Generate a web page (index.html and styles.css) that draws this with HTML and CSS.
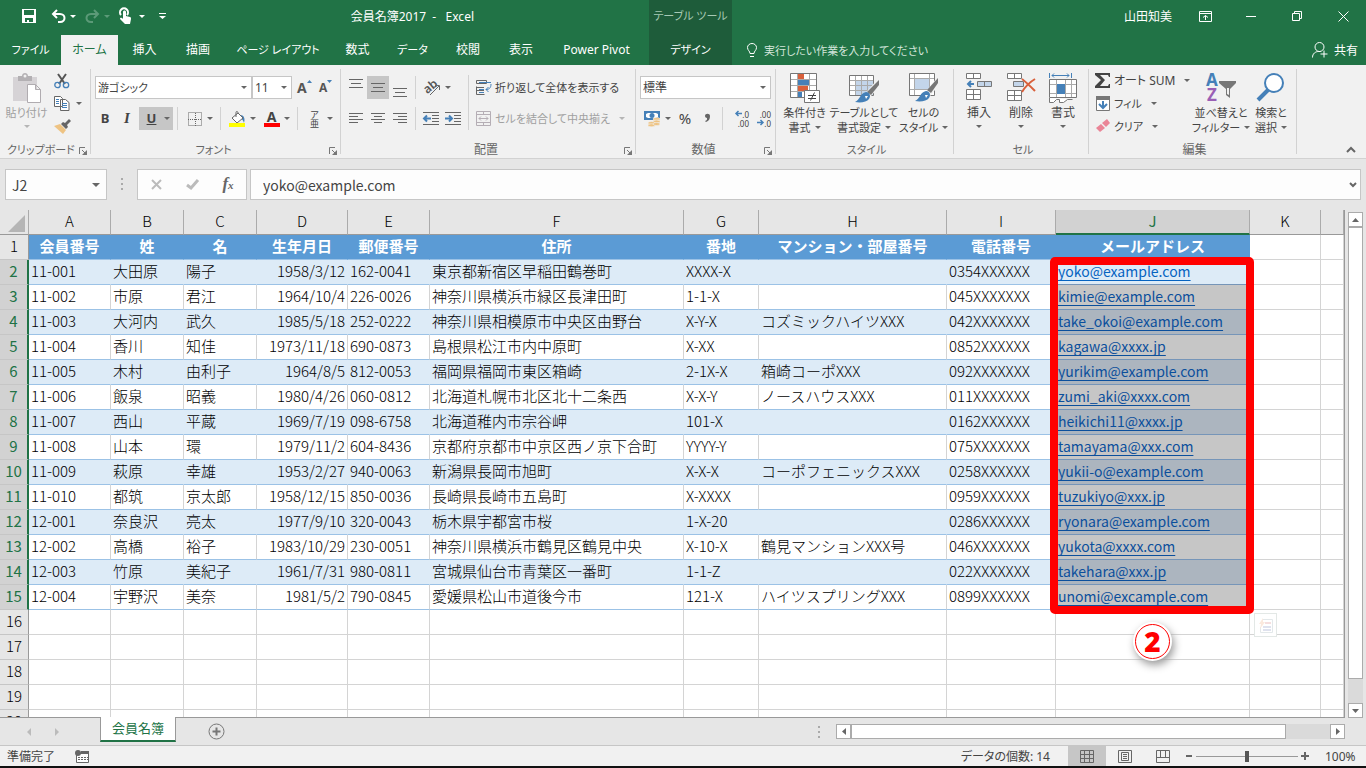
FILE: index.html
```html
<!DOCTYPE html>
<html lang="ja">
<head>
    <meta charset="UTF-8">
    <title>会員名簿2017 - Excel</title>
    <meta name="viewport" content="width=device-width, initial-scale=1">
    <link rel="stylesheet" href="styles.css">
</head>
<body>
<header class="titlebar">
    <div class="title-left">
        <div class="title-row">
            <div class="quick-access">
                <button class="qat save" aria-label="上書き保存"><svg width="14" height="14"><path fill="#fff" fill-rule="evenodd" d="M0 0h14v14H0zM2 1v5h10V1zM3 9v4h2v-2h2v2h4V9z"/></svg></button>
                <button class="qat" aria-label="元に戻す"><svg width="15" height="13" fill="none" stroke="#fff" stroke-width="2"><path d="M6 0L2 4l4 4M2 4h7c6 0 6 8 0 8H7"/></svg><i class="caret"></i></button>
                <button class="qat dim" aria-label="やり直し"><svg width="15" height="13" fill="none" stroke="#5c9a78" stroke-width="2"><path d="M9 0l4 4-4 4M13 4H6c-6 0-6 8 0 8h2"/></svg><i class="caret"></i></button>
                <button class="qat touch" aria-label="タッチ/マウス モードの切り替え"><svg width="13" height="16"><path fill="none" stroke="#fff" stroke-width="2" d="M2 7a4 4 0 1 1 6 0"/><path fill="#fff" d="M4 4c0-2 3-2 3 0v4l4 1c1 0 1 1 1 2l-1 5H6L1 11c0-1 1-2 3 0z"/></svg><i class="caret"></i></button>
                <button class="qat more" aria-label="クイック アクセス ツール バーのユーザー設定"><svg width="7" height="6"><path fill="#fff" d="M0 0h7v1H0zM0 3h7L3.500 6z"/></svg></button>
            </div>
            <h1 class="doc-title">会員名簿2017&nbsp; -&nbsp;&nbsp; Excel</h1>
        </div>
        <nav class="tabs">
            <a href="#" class="kana">ファイル</a>
            <a href="#" class="active">ホーム</a>
            <a href="#">挿入</a>
            <a href="#">描画</a>
            <a href="#" class="kana">ページ レイアウト</a>
            <a href="#">数式</a>
            <a href="#" class="kana">データ</a>
            <a href="#">校閲</a>
            <a href="#">表示</a>
            <a href="#">Power Pivot</a>
        </nav>
    </div>
    <div class="title-context">
        <span class="context-name kana">テーブル ツール</span>
        <a href="#" class="kana">デザイン</a>
    </div>
    <div class="title-right">
        <div class="window-row">
            <span class="user">山田知美</span>
            <button aria-label="リボンの表示オプション"><svg width="13" height="11" fill="none" stroke="#fff"><path d="M.5.5h12v10H.5zM0 2.500h13M6.500 9V4.500M4 6.500l2.500-2 2.500 2"/></svg></button>
            <button aria-label="最小化"><svg width="10" height="10"><path stroke="#fff" d="M0 5.500h10"/></svg></button>
            <button aria-label="元に戻す (縮小)"><svg width="10" height="10" fill="none" stroke="#fff"><path d="M.5 2.500h7v7h-7zM2.500 2V.5h7v7H8"/></svg></button>
            <button aria-label="閉じる"><svg width="11" height="11"><path stroke="#fff" d="M.5.5l10 10M10.500.5l-10 10"/></svg></button>
        </div>
        <div class="tell-row">
            <button class="tell kana"><svg width="10" height="14" fill="none" stroke="#fff"><path d="M3 10.500C3 8 .5 7.500.5 4.500a4.500 4 0 0 1 9 0C9.500 7.500 7 8 7 10.500zM3 13.500h4"/></svg>実行したい作業を入力してください</button>
            <button class="share"><svg width="16" height="16" fill="none" stroke="#fff"><circle cx="7.500" cy="5" r="4.500"/><path d="M.5 15.500c0-4 3-6 6-6h2M12 8.500v7M8.500 12h7"/></svg>共有</button>
        </div>
    </div>
</header>

<section class="ribbon" aria-label="リボン">
    <div class="group clipboard">
        <div class="group-body">
            <button class="big kana disabled"><svg width="30" height="30"><path fill="#d6d3d6" d="M1 4h24v24H1z"/><path fill="#b3b0b3" d="M6 3h4c0-4 6-4 6 0h4v5H6z"/><circle cx="13" cy="3" r="1.500" fill="#f1f1f1"/><path fill="#fff" stroke="#b0acb0" d="M15.500 11.500h8l5 5v13h-13zM23.500 11.500v5h5"/></svg><span>貼り付け</span><i class="caret"></i></button>
            <div class="stack">
                <button aria-label="切り取り"><svg width="16" height="16" fill="none" stroke-width="2"><path stroke="#555" d="M4 1l7 10M12 1L5 11"/><circle stroke="#4580b8" stroke-width="1.300" cx="3.500" cy="12" r="2.700"/><circle stroke="#4580b8" stroke-width="1.300" cx="12" cy="12" r="2.700"/></svg></button>
                <button aria-label="コピー"><svg width="16" height="15" fill="#fff" stroke="#666"><path d="M.5.500h6l2 2v8h-8zM6.500 3.500h5l3.500 3v8H6.500z"/><path stroke="#4580b8" d="M2 3.500h3M2 5.500h3M2 7.500h3M8 7.500h5M8 9.500h5M8 11.500h5"/></svg><i class="caret"></i></button>
                <button aria-label="書式のコピー/貼り付け"><svg width="17" height="15"><path fill="#666" d="M7 5l2-2 2 1 4-4 2 2-4 4 1 2-2 2z"/><path fill="#eec383" d="M6 5l6 6-3 4L0 7z"/></svg></button>
            </div>
        </div>
        <div class="group-label kana"><span>クリップボード</span><button class="launcher" aria-label="クリップボード"><svg width="8" height="8"><path fill="none" stroke="#777" d="M.5 7V.5H6M3 3l3 3"/><path fill="#777" d="M8 3v5H3z"/></svg></button></div>
    </div>

    <div class="group font">
        <div class="group-body rows">
            <div class="row">
                <span class="select font-name kana"><select aria-label="フォント"><option>游ゴシック</option></select></span>
                <span class="select font-size"><select aria-label="フォント サイズ"><option>11</option></select></span>
                <button class="tool grow" aria-label="フォント サイズの拡大"><b>A</b><svg width="5" height="3"><path fill="#4580b8" d="M0 3h5L2.500 0z"/></svg></button>
                <button class="tool grow small" aria-label="フォント サイズの縮小"><b>A</b><svg width="5" height="3"><path fill="#4580b8" d="M0 0h5L2.500 3z"/></svg></button>
            </div>
            <div class="row">
                <button class="tool"><b>B</b></button>
                <button class="tool"><em>I</em></button>
                <button class="tool drop pressed"><u>U</u><i class="caret"></i></button>
                <i class="sep"></i>
                <button class="tool drop" aria-label="罫線"><svg width="14" height="14" fill="none" stroke="#666" stroke-dasharray="1 1"><path d="M.5.5h13v13H.5zM7.500 1v13M0 7.500h14"/></svg><i class="caret"></i></button>
                <i class="sep"></i>
                <button class="tool drop" aria-label="塗りつぶしの色"><svg width="17" height="16"><path fill="#4580b8" d="M11 4c5 0 5 5 4 8-1-3-2-4-4-5z"/><path fill="#fff" stroke="#666" d="M3 7l6-5 5 5-6 5z"/><path fill="none" stroke="#666" d="M7 6V1.500C7 0 9 0 9 2"/><path fill="#ff0" d="M0 12h16v4H0z"/></svg><i class="caret"></i></button>
                <button class="tool drop fontcolor" aria-label="フォントの色"><b>A</b><i class="caret"></i></button>
                <i class="sep"></i>
                <button class="tool drop ruby"><span>ア<br>亜</span><i class="caret"></i></button>
            </div>
        </div>
        <div class="group-label kana"><span>フォント</span><button class="launcher" aria-label="フォントの設定"><svg width="8" height="8"><path fill="none" stroke="#777" d="M.5 7V.5H6M3 3l3 3"/><path fill="#777" d="M8 3v5H3z"/></svg></button></div>
    </div>

    <div class="group align">
        <div class="group-body">
            <div class="rows">
                <div class="row">
                    <button class="tool top" aria-label="上揃え"><svg width="14" height="9" stroke="#666"><path d="M0 .5h14M2 4.500h10M0 8.500h14"/></svg></button>
                    <button class="tool pressed" aria-label="上下中央揃え"><svg width="14" height="9" stroke="#666"><path d="M0 .5h14M2 4.500h10M0 8.500h14"/></svg></button>
                    <button class="tool bottom" aria-label="下揃え"><svg width="14" height="9" stroke="#666"><path d="M0 .5h14M2 4.500h10M0 8.500h14"/></svg></button>
                    <i class="sep"></i>
                    <button class="tool drop" aria-label="方向"><svg width="17" height="16"><text x="0" y="11" class="glyph" transform="rotate(-40 6 8)">ab</text><path fill="none" stroke="#666" d="M6 15l9-9M11 5.500h4.500V10"/></svg><i class="caret"></i></button>
                </div>
                <div class="row">
                    <button class="tool" aria-label="左揃え"><svg width="14" height="11" stroke="#666"><path d="M0 .5h14M0 3.500h9M0 6.500h14M0 9.500h9"/></svg></button>
                    <button class="tool" aria-label="中央揃え"><svg width="14" height="11" stroke="#666"><path d="M0 .5h14M3 3.500h8M0 6.500h14M3 9.500h8"/></svg></button>
                    <button class="tool" aria-label="右揃え"><svg width="14" height="11" stroke="#666"><path d="M0 .5h14M5 3.500h9M0 6.500h14M5 9.500h9"/></svg></button>
                    <i class="sep"></i>
                    <button class="tool" aria-label="インデントを減らす"><svg width="16" height="13" fill="none" stroke="#666"><path d="M0 .5h16M9 3.500h7M9 6.500h7M9 9.500h7M0 12.500h16"/><path stroke="#4580b8" stroke-width="2" d="M8 6.500H1M4 3.500l-3 3 3 3"/></svg></button>
                    <button class="tool" aria-label="インデントを増やす"><svg width="16" height="13" fill="none" stroke="#666"><path d="M0 .5h16M9 3.500h7M9 6.500h7M9 9.500h7M0 12.500h16"/><path stroke="#4580b8" stroke-width="2" d="M0 6.500h7M4 3.500l3 3-3 3"/></svg></button>
                </div>
            </div>
            <i class="sep long"></i>
            <div class="rows">
                <button class="labelled kana"><svg width="16" height="15" fill="none" stroke="#666"><path d="M.5.5h10v3H.5zM0 7.500h8M0 10.500h8M.5 6.500v8h8"/><path stroke="#4580b8" d="M3 2.500h12M3 9.500h5M3 12.500h5M15 4c0 4-2 5.500-5 5.500M12.500 7l-2.500 2.500 2.500 2.500"/></svg>折り返して全体を表示する</button>
                <button class="labelled kana disabled"><svg width="16" height="15" fill="none" stroke="#b5aeb5"><path d="M.5.5h14v14H.5zM0 3.500h15M0 11.500h15M7.500 0v4M7.500 11v4M3 7.500h9M5 5.500l-2 2 2 2M10 5.500l2 2-2 2"/></svg>セルを結合して中央揃え<i class="caret"></i></button>
            </div>
        </div>
        <div class="group-label"><span>配置</span><button class="launcher" aria-label="配置の設定"><svg width="8" height="8"><path fill="none" stroke="#777" d="M.5 7V.5H6M3 3l3 3"/><path fill="#777" d="M8 3v5H3z"/></svg></button></div>
    </div>

    <div class="group number">
        <div class="group-body rows">
            <div class="row">
                <span class="select format"><select aria-label="表示形式"><option>標準</option></select></span>
            </div>
            <div class="row">
                <button class="tool drop" aria-label="通貨表示形式"><svg width="17" height="16"><path fill="#4580b8" d="M0 0h16v9H0z"/><path fill="#fff" d="M2 3l2-1h8l2 1v3l-2 1H4L2 6z"/><circle cx="8" cy="4.500" r="2.500" fill="#4580b8"/><g fill="#eec383" stroke="#f1f1f1" stroke-width=".6"><ellipse cx="12.500" cy="8" rx="3.500" ry="1.500"/><ellipse cx="12.500" cy="10.500" rx="3.500" ry="1.500"/><ellipse cx="7.500" cy="12" rx="3.500" ry="1.500"/><ellipse cx="7.500" cy="14.300" rx="3.500" ry="1.500"/><ellipse cx="12.500" cy="13" rx="3.500" ry="1.500"/></g></svg><i class="caret"></i></button>
                <button class="tool percent">%</button>
                <button class="tool" aria-label="桁区切りスタイル"><svg width="6" height="9"><path fill="#666" d="M1 2c0-3 5-3 5 0 0 3-1 5-4 6l-1-1c2-1 2-1 2-3-1 0-2-1-2-2z"/></svg></button>
                <i class="sep"></i>
                <button class="tool decimals"><span><svg width="7" height="7" fill="none" stroke="#4580b8" stroke-width="1.500"><path d="M7 3.500H1M3.500 1L1 3.500 3.500 6"/></svg>.0</span><span>.00</span></button>
                <button class="tool decimals"><span>.00</span><span><svg width="7" height="7" fill="none" stroke="#4580b8" stroke-width="1.500"><path d="M0 3.500h6M3.500 1L6 3.500 3.500 6"/></svg>.0</span></button>
            </div>
        </div>
        <div class="group-label"><span>数値</span><button class="launcher" aria-label="表示形式の設定"><svg width="8" height="8"><path fill="none" stroke="#777" d="M.5 7V.5H6M3 3l3 3"/><path fill="#777" d="M8 3v5H3z"/></svg></button></div>
    </div>

    <div class="group styles">
        <div class="group-body">
            <button class="big kana"><svg width="30" height="30"><path fill="#fff" stroke="#777" d="M.5.5h26v24H.5z"/><path stroke="#aaa" d="M7.500 1v23M19.500 1v23M1 6.500h25M1 12.500h25M1 18.500h25"/><path fill="#d9603b" d="M8 1h6v5H8zM8 13h10v5H8z"/><path fill="#4580b8" d="M8 7h11v5H8zM8 19h4v5H8z"/><path fill="#fff" stroke="#777" d="M14.500 17.500h15v12h-15z"/><path stroke="#444" d="M18 22.500h8M18 25.500h8M24.500 19.500l-4 8"/></svg><span>条件付き<br>書式<i class="caret"></i></span></button>
            <button class="big kana"><svg width="30" height="30"><path fill="#fff" stroke="#777" d="M.5 2.500h24v20H.5z"/><path fill="#c3d5ea" d="M7 8h17v14H7z"/><path stroke="#aaa" d="M6.500 3v19M12.500 3v19M18.500 3v19M1 7.500h23M1 12.500h23M1 17.500h23"/><path stroke="#f1f1f1" stroke-width="6" d="M31 8L18 23"/><path fill="#777" d="M30 7v5l-8 10-4-3z"/><path fill="#4580b8" d="M17 19c4 0 5 4 3 7s-8 4-14 3c5-2 5-9 11-10z"/><path fill="#fff" d="M16 23l3 0-2 3z"/></svg><span>テーブルとして<br>書式設定<i class="caret"></i></span></button>
            <button class="big kana"><svg width="30" height="30"><path fill="#fff" stroke="#777" d="M.5.5h25v22H.5z"/><path stroke="#aaa" d="M5.500 1v21M20.500 1v21M1 5.500h24M1 16.500h24"/><path fill="#c3d5ea" d="M6 6h14v10H6z"/><path stroke="#f1f1f1" stroke-width="6" d="M31 6L18 22"/><path fill="#777" d="M29 5v5l-7 10-4-3z"/><path fill="#4580b8" d="M17 18c4 0 5 4 3 7s-8 4-14 3c5-2 5-9 11-10z"/><path fill="#fff" d="M16 22l3 0-2 3z"/></svg><span>セルの<br>スタイル<i class="caret"></i></span></button>
        </div>
        <div class="group-label kana"><span>スタイル</span></div>
    </div>

    <div class="group cells">
        <div class="group-body">
            <button class="big"><svg width="28" height="30"><path fill="#fff" stroke="#777" d="M1.500.5h14v5h-14zM8.500.5v5M1.500 16.500h14v10h-14zM8.500 16.500v10M1.500 21.500h14"/><path fill="#c3d5ea" stroke="#777" d="M12.500 8.500h14v5h-14zM19.500 8.500v5"/><path fill="none" stroke="#4580b8" stroke-width="2" d="M9 11H3M6 8l-3 3 3 3"/></svg><span>挿入</span><i class="caret"></i></button>
            <button class="big"><svg width="30" height="30"><path fill="#fff" stroke="#777" d="M1.500.5h14v5h-14zM8.500.5v5M1.500 17.500h14v10h-14zM8.500 17.500v10M1.500 22.500h14"/><path fill="#c3d5ea" stroke="#777" d="M7.500 8.500h10v5h-10z"/><path fill="none" stroke="#d9603b" stroke-width="2" d="M16 6c4 3 9 8 13 12M29 6c-5 3-10 8-13 13"/></svg><span>削除</span><i class="caret"></i></button>
            <button class="big"><svg width="28" height="30"><path fill="#fff" stroke="#777" d="M.5 6.500h27v18H.5z"/><path stroke="#aaa" d="M7.500 7v17M16.500 7v17M22.500 7v17M1 11.500h26M1 20.500h26"/><path fill="#4580b8" d="M8 11h8v10H8z"/><path fill="#fff" stroke="#777" d="M.5 25v4.500h4l3-3h3v3h4l4-3h5"/><path fill="none" stroke="#4580b8" d="M.5 0v5M22.500 0v5M3 2.500h17M5 .5l-2 2 2 2M18 .5l2 2-2 2"/></svg><span>書式</span><i class="caret"></i></button>
        </div>
        <div class="group-label kana"><span>セル</span></div>
    </div>

    <div class="group editing">
        <div class="group-body">
            <div class="stack">
                <button class="labelled"><svg width="16" height="15"><path fill="#444" d="M0 0h15v4h-1l-1-2H5l5 5-5 6h8l1-2h1v4H0v-2l6-6-6-5z"/></svg>オート SUM<i class="caret"></i></button>
                <button class="labelled kana"><svg width="16" height="15"><path fill="#fff" stroke="#777" d="M1.500.5h13v14h-13z"/><path fill="#777" d="M1 0h14v4H1z"/><path fill="none" stroke="#4580b8" stroke-width="2" d="M8 5v7M4 8l4 4 4-4"/></svg>フィル<i class="caret"></i></button>
                <button class="labelled kana"><svg width="16" height="15"><path fill="#ea8597" d="M7 4l5-4 3 4-4 4z"/><path fill="#ea8597" d="M6 5l4 4-5 4-4-4z"/></svg>クリア<i class="caret"></i></button>
            </div>
            <button class="big kana sort"><svg width="30" height="30"><text x="0" y="13" class="letter blue">A</text><text x="1" y="28" class="letter purple">Z</text><path fill="#777" d="M13 8h17v2l-6 6v9l-4-3v-6l-7-6z"/><path fill="#f1f1f1" d="M21 15h2v7l-2-1z"/></svg><span>並べ替えと<br>フィルター<i class="caret"></i></span></button>
            <button class="big kana find"><svg width="30" height="30" fill="none" stroke="#4580b8"><path stroke-width="4" d="M12 17L2 27"/><circle cx="18" cy="10" r="9" fill="#fff" stroke-width="2"/></svg><span>検索と<br>選択<i class="caret"></i></span></button>
        </div>
        <div class="group-label"><span>編集</span></div>
    </div>
    <button class="collapse" aria-label="リボンを折りたたむ"><svg width="10" height="6" fill="none" stroke="#666" stroke-width="2"><path d="M1 5l4-4 4 4"/></svg></button>
</section>

<section class="formula-bar">
    <div class="name-box"><input type="text" value="J2" aria-label="名前ボックス"><i class="caret"></i></div>
    <i class="grip"></i>
    <div class="formula-tools">
        <button aria-label="キャンセル"><svg width="11" height="11"><path stroke="#bbb" stroke-width="2" d="M1 1l9 9M10 1l-9 9"/></svg></button>
        <button aria-label="入力"><svg width="13" height="11" fill="none"><path stroke="#bbb" stroke-width="3" d="M1 6l4 3 7-8"/></svg></button>
        <button class="fx" aria-label="関数の挿入"><em>f<small>x</small></em></button>
    </div>
    <div class="formula"><input type="text" value="yoko@example.com" aria-label="数式バー"><svg width="8" height="6" fill="none" stroke="#666" stroke-width="2"><path d="M1 1l3 3 3-3"/></svg></div>
</section>

<main class="sheet">
    <div class="grid-area">
        <table class="grid">
            <colgroup><col class="c-head"><col class="c-a"><col class="c-b"><col class="c-c"><col class="c-d"><col class="c-e"><col class="c-f"><col class="c-g"><col class="c-h"><col class="c-i"><col class="c-j"><col class="c-k"><col></colgroup>
            <thead>
            <tr><th class="corner"><svg width="17" height="17"><path fill="#b5b5b5" d="M17 0v17H0z"/></svg></th><th>A</th><th>B</th><th>C</th><th>D</th><th>E</th><th>F</th><th>G</th><th>H</th><th>I</th><th class="selected">J</th><th>K</th><th></th></tr>
            </thead>
            <tbody class="members">
            <tr class="titles"><th>1</th><td>会員番号</td><td>姓</td><td>名</td><td>生年月日</td><td>郵便番号</td><td>住所</td><td>番地</td><td>マンション・部屋番号</td><td>電話番号</td><td>メールアドレス</td><td></td><td></td></tr>
            <tr><th>2</th><td>11-001</td><td>大田原</td><td>陽子</td><td>1958/3/12</td><td>162-0041</td><td>東京都新宿区早稲田鶴巻町</td><td>XXXX-X</td><td></td><td>0354XXXXXX</td><td class="current"><a href="#">yoko@example.com</a></td><td></td><td></td></tr>
            <tr><th>3</th><td>11-002</td><td>市原</td><td>君江</td><td>1964/10/4</td><td>226-0026</td><td>神奈川県横浜市緑区長津田町</td><td>1-1-X</td><td></td><td>045XXXXXXX</td><td><a href="#">kimie@example.com</a></td><td></td><td></td></tr>
            <tr><th>4</th><td>11-003</td><td>大河内</td><td>武久</td><td>1985/5/18</td><td>252-0222</td><td>神奈川県相模原市中央区由野台</td><td>X-Y-X</td><td>コズミックハイツXXX</td><td>042XXXXXXX</td><td><a href="#">take_okoi@example.com</a></td><td></td><td></td></tr>
            <tr><th>5</th><td>11-004</td><td>香川</td><td>知佳</td><td>1973/11/18</td><td>690-0873</td><td>島根県松江市内中原町</td><td>X-XX</td><td></td><td>0852XXXXXX</td><td><a href="#">kagawa@xxxx.jp</a></td><td></td><td></td></tr>
            <tr><th>6</th><td>11-005</td><td>木村</td><td>由利子</td><td>1964/8/5</td><td>812-0053</td><td>福岡県福岡市東区箱崎</td><td>2-1X-X</td><td>箱崎コーポXXX</td><td>092XXXXXXX</td><td><a href="#">yurikim@example.com</a></td><td></td><td></td></tr>
            <tr><th>7</th><td>11-006</td><td>飯泉</td><td>昭義</td><td>1980/4/26</td><td>060-0812</td><td>北海道札幌市北区北十二条西</td><td>X-X-Y</td><td>ノースハウスXXX</td><td>011XXXXXXX</td><td><a href="#">zumi_aki@xxxx.com</a></td><td></td><td></td></tr>
            <tr><th>8</th><td>11-007</td><td>西山</td><td>平蔵</td><td>1969/7/19</td><td>098-6758</td><td>北海道稚内市宗谷岬</td><td>101-X</td><td></td><td>0162XXXXXX</td><td><a href="#">heikichi11@xxxx.jp</a></td><td></td><td></td></tr>
            <tr><th>9</th><td>11-008</td><td>山本</td><td>環</td><td>1979/11/2</td><td>604-8436</td><td>京都府京都市中京区西ノ京下合町</td><td>YYYY-Y</td><td></td><td>075XXXXXXX</td><td><a href="#">tamayama@xxx.com</a></td><td></td><td></td></tr>
            <tr><th>10</th><td>11-009</td><td>萩原</td><td>幸雄</td><td>1953/2/27</td><td>940-0063</td><td>新潟県長岡市旭町</td><td>X-X-X</td><td>コーポフェニックスXXX</td><td>0258XXXXXX</td><td><a href="#">yukii-o@example.com</a></td><td></td><td></td></tr>
            <tr><th>11</th><td>11-010</td><td>都筑</td><td>京太郎</td><td>1958/12/15</td><td>850-0036</td><td>長崎県長崎市五島町</td><td>X-XXXX</td><td></td><td>0959XXXXXX</td><td><a href="#">tuzukiyo@xxx.jp</a></td><td></td><td></td></tr>
            <tr><th>12</th><td>12-001</td><td>奈良沢</td><td>亮太</td><td>1977/9/10</td><td>320-0043</td><td>栃木県宇都宮市桜</td><td>1-X-20</td><td></td><td>0286XXXXXX</td><td><a href="#">ryonara@example.com</a></td><td></td><td></td></tr>
            <tr><th>13</th><td>12-002</td><td>高橋</td><td>裕子</td><td>1983/10/29</td><td>230-0051</td><td>神奈川県横浜市鶴見区鶴見中央</td><td>X-10-X</td><td>鶴見マンションXXX号</td><td>046XXXXXXX</td><td><a href="#">yukota@xxxx.com</a></td><td></td><td></td></tr>
            <tr><th>14</th><td>12-003</td><td>竹原</td><td>美紀子</td><td>1961/7/31</td><td>980-0811</td><td>宮城県仙台市青葉区一番町</td><td>1-1-Z</td><td></td><td>022XXXXXXX</td><td><a href="#">takehara@xxx.jp</a></td><td></td><td></td></tr>
            <tr><th>15</th><td>12-004</td><td>宇野沢</td><td>美奈</td><td>1981/5/2</td><td>790-0845</td><td>愛媛県松山市道後今市</td><td>121-X</td><td>ハイツスプリングXXX</td><td>0899XXXXXX</td><td><a href="#">unomi@excample.com</a></td><td></td><td></td></tr>
            </tbody>
            <tbody>
            <tr><th>16</th><td></td><td></td><td></td><td></td><td></td><td></td><td></td><td></td><td></td><td></td><td></td><td></td></tr>
            <tr><th>17</th><td></td><td></td><td></td><td></td><td></td><td></td><td></td><td></td><td></td><td></td><td></td><td></td></tr>
            <tr><th>18</th><td></td><td></td><td></td><td></td><td></td><td></td><td></td><td></td><td></td><td></td><td></td><td></td></tr>
            <tr><th>19</th><td></td><td></td><td></td><td></td><td></td><td></td><td></td><td></td><td></td><td></td><td></td><td></td></tr>
            <tr><th>20</th><td></td><td></td><td></td><td></td><td></td><td></td><td></td><td></td><td></td><td></td><td></td><td></td></tr>
            </tbody>
        </table>
        <div class="highlight"></div>
        <div class="step">2</div>
        <button class="quick-analysis" aria-label="クイック分析"><svg width="14" height="15"><path fill="none" stroke="#e3e8ea" d="M4 1.500h9.500v13H1.500V9"/><path fill="#fbe9dd" d="M4 0L0 6h2l-1 5 5-7H4z"/><path stroke="#f5dede" stroke-width="2" d="M6 5h6"/><path stroke="#dfe2ee" stroke-width="2" d="M4 9h8M4 12h8"/></svg></button>
    </div>
    <div class="vscroll">
        <button aria-label="上へスクロール"><svg width="7" height="4"><path fill="#666" d="M0 4h7L3.500 0z"/></svg></button>
        <i class="thumb"></i>
        <i class="track"></i>
        <button aria-label="下へスクロール"><svg width="7" height="4"><path fill="#666" d="M0 0h7L3.500 4z"/></svg></button>
    </div>
</main>

<section class="sheet-tabs">
    <button class="nav" aria-label="前のシート"><svg width="4" height="8"><path fill="#bbb" d="M4 0v8L0 4z"/></svg></button>
    <button class="nav" aria-label="次のシート"><svg width="4" height="8"><path fill="#bbb" d="M0 0v8l4-4z"/></svg></button>
    <button class="tab">会員名簿</button>
    <button class="add" aria-label="新しいシート"><svg width="17" height="17" fill="none" stroke="#777"><circle cx="8.500" cy="8.500" r="7.500"/><path stroke-width="2" d="M4.500 8.500h8M8.500 4.500v8"/></svg></button>
    <i class="grip"></i>
    <div class="hscroll">
        <button aria-label="左へスクロール"><svg width="4" height="7"><path fill="#666" d="M4 0v7L0 3.500z"/></svg></button>
        <i class="thumb"></i>
        <i class="track"></i>
        <button aria-label="右へスクロール"><svg width="4" height="7"><path fill="#666" d="M0 0v7l4-3.500z"/></svg></button>
    </div>
</section>

<footer class="status">
    <span class="ready">準備完了</span>
    <button class="macro" aria-label="マクロの記録"><svg width="14" height="13"><path fill="#fff" stroke="#666" d="M1.500 3.500h12v9h-12z"/><path fill="#666" d="M6 1h8v3H6z"/><circle cx="3" cy="3" r="3" fill="#666"/><path stroke="#666" stroke-dasharray="2 1" d="M3 7.500h10M3 9.500h10"/></svg></button>
    <span class="count">データの個数: 14</span>
    <button class="view active" aria-label="標準"><svg width="14" height="13" fill="none" stroke="#666"><path d="M.5.5h13v12H.5zM4.500 0v13M9.500 0v13M0 4.500h14M0 8.500h14"/></svg></button>
    <button class="view" aria-label="ページ レイアウト"><svg width="14" height="13" fill="none" stroke="#666"><path d="M.5.5h13v12H.5zM3.500 2.500h7v8h-7zM5 4.500h4M5 6.500h4M5 8.500h4"/></svg></button>
    <button class="view" aria-label="改ページ プレビュー"><svg width="14" height="13" fill="none" stroke="#666"><path d="M.5.5h13v12H.5zM4.500 0v7.500h5V0M0 7.500h14M9.500 0v7"/></svg></button>
    <button class="zoom-step" aria-label="縮小"><svg width="6" height="2"><path fill="#666" d="M0 0h6v2H0z"/></svg></button>
    <input class="zoom" type="range" min="0" max="100" value="50" aria-label="ズーム">
    <button class="zoom-step" aria-label="拡大"><svg width="8" height="8"><path fill="#666" d="M3 0h2v3h3v2H5v3H3V5H0V3h3z"/></svg></button>
    <span class="zoom-value">100%</span>
</footer>
</body>
</html>
```
FILE: styles.css
```css
* {
    box-sizing: border-box;
}
html, body {
    height: 100%;
}
body {
    margin: 0;
    display: flex;
    flex-direction: column;
    overflow: hidden;
    background-color: #e6e6e6;
    color: #444;
    font-family: "Noto Sans", "Noto Sans CJK JP", sans-serif;
    font-size: 12px;
    line-height: 15px;
    font-feature-settings: "palt";
}
button, input, select {
    font: inherit;
    font-feature-settings: inherit;
    color: inherit;
    background: none;
    border: 0;
    padding: 0;
    margin: 0;
}
button {
    display: flex;
    align-items: center;
    justify-content: center;
    white-space: nowrap;
}
svg {
    display: block;
    flex: none;
    overflow: visible;
}
a {
    color: inherit;
    text-decoration: none;
}
.kana {
    font-size: 11px;
}
.caret {
    display: inline-block;
    flex: none;
    border: solid transparent;
    border-width: 3px 3px 0;
    border-top-color: #666;
}

/* title bar */
.titlebar {
    flex: none;
    display: flex;
    height: 65px;
    background-color: #217346;
    color: #fff;
}
.title-left {
    width: 649px;
}
.title-row, .window-row {
    display: flex;
    align-items: center;
    height: 35px;
    padding-bottom: 3px;
}
.quick-access {
    display: flex;
    padding-left: 22px;
}
.qat {
    gap: 4px;
    margin-right: 9px;
}
.qat .caret {
    border-top-color: #fff;
}
.qat.save {
    margin-right: 15px;
}
.qat.dim .caret {
    border-top-color: #5c9a78;
}
.qat.touch {
    gap: 7px;
}
.qat.more {
    margin-left: 5px;
}
.doc-title {
    flex: 1;
    margin: 0;
    padding-right: 175px;
    text-align: right;
    font-size: 12px;
    font-weight: normal;
}
.tabs {
    display: grid;
    grid-template-columns: 61px 57px 53px 54px 106px 53px 57px 54px 52px 99px;
    height: 30px;
    line-height: 29px;
    text-align: center;
}
.tabs .active {
    background-color: #f1f1f1;
    color: #217346;
}
.title-context {
    width: 83px;
    display: flex;
    flex-direction: column;
    text-align: center;
    background-color: #1e5c3a;
}
.context-name {
    height: 35px;
    line-height: 31px;
    color: #a6c9b4;
}
.title-context a {
    line-height: 29px;
}
.title-right {
    flex: 1;
}
.window-row {
    justify-content: flex-end;
}
.window-row button {
    width: 46px;
    height: 30px;
}
.user {
    margin-right: 10px;
}
.tell-row {
    display: flex;
    justify-content: space-between;
    height: 30px;
    padding: 0 8px 0 15px;
}
.tell {
    gap: 7px;
    color: #d3e5da;
}
.share {
    gap: 6px;
}

/* ribbon */
.ribbon {
    flex: none;
    display: flex;
    height: 94px;
    background-color: #f1f1f1;
    border-bottom: solid 1px #d2d2d2;
}
.group {
    position: relative;
    display: flex;
    flex-direction: column;
}
.group::after {
    content: "";
    position: absolute;
    right: 0;
    top: 4px;
    bottom: 4px;
    border-right: solid 1px #d2d2d2;
}
.clipboard { width: 91px; }
.font { width: 250px; }
.align { width: 295px; }
.number { width: 140px; }
.styles { width: 178px; }
.cells { width: 135px; }
.editing { width: 208px; }
.group-body {
    display: flex;
    height: 75px;
    padding: 0 4px;
}
.group-label {
    display: flex;
    align-items: center;
    height: 18px;
    padding: 0 4px 0 7px;
    color: #666;
    white-space: nowrap;
}
.group-label span {
    flex: 1;
    text-align: center;
}
.group-label .launcher {
    padding-top: 4px;
}
.clipboard .group-label span {
    text-align: left;
}
.rows {
    display: flex;
    flex-direction: column;
    gap: 8px;
    padding-top: 11px;
}
.font .row:last-child {
    margin-left: -1px;
}
.row {
    display: flex;
    height: 23px;
}
.select {
    position: relative;
    display: flex;
    background-color: #fff;
    border: solid 1px #c6c6c6;
}
.select select {
    appearance: none;
    flex: 1;
    padding-left: 2px;
    outline: 0;
}
.select::after {
    content: "";
    position: absolute;
    right: 4px;
    top: 9px;
    border: solid transparent;
    border-width: 3px 3px 0;
    border-top-color: #666;
    pointer-events: none;
}
.font-name { width: 157px; }
.font-size {
    width: 40px;
    margin-right: 5px;
}
.format { width: 131px; }
.font-name, .font-size {
    flex: none;
}
.tool {
    width: 22px;
    height: 23px;
    font-size: 13px;
}
.tool.drop {
    width: 34px;
    justify-content: flex-start;
}
.tool.drop > :first-child {
    margin: 0 auto;
}
.tool.drop .caret {
    margin-right: 3px;
}
.tool u {
    font-weight: bold;
}
.tool em {
    font-family: "Liberation Serif", serif;
    font-size: 15px;
    font-weight: bold;
}
.pressed {
    background-color: #c6c6c6;
}
.font .pressed {
    margin-left: 1px;
}
.tool.grow {
    align-items: flex-start;
    justify-content: flex-start;
    font-size: 14px;
    line-height: 23px;
    color: #555;
}
.tool.grow svg {
    margin-top: 4px;
}
.tool.grow.small {
    padding-left: 2px;
    font-size: 12px;
}
.tool.top svg {
    margin-bottom: 9px;
}
.tool.bottom svg {
    margin-top: 10px;
}
.fontcolor b {
    width: 16px;
    font-size: 14px;
    line-height: 12px;
    border-bottom: solid 4px #f00;
}
.ruby span {
    font-size: 9px;
    line-height: 9px;
}
.tool.percent {
    font-size: 15px;
}
.decimals {
    flex-direction: column;
    align-items: flex-end;
    font-size: 8px;
    line-height: 9px;
}
.decimals span {
    display: flex;
}
.glyph {
    font-size: 12px;
    font-weight: 600;
    fill: #555;
}
.sep {
    flex: none;
    width: 1px;
    margin: 0 4px;
    background-color: #d2d2d2;
}
.sep.long {
    margin: 10px 7px 10px 0;
}
.align .rows .row {
    width: 123px;
}
.labelled {
    justify-content: flex-start;
    height: 23px;
    gap: 3px;
}
.labelled .caret {
    margin-left: 6px;
}
.disabled {
    color: #a0a0a0;
}
.disabled .caret {
    border-top-color: #b5b5b5;
}
.big {
    flex-direction: column;
    justify-content: flex-start;
    padding-top: 8px;
}
.big svg {
    margin-bottom: 2px;
}
.big > .caret {
    margin-top: 5px;
}
.big span .caret {
    margin: 0 0 3px 4px;
}
.clipboard .big {
    width: 45px;
}
.styles .group-body {
    padding-left: 3px;
}
.styles .big { width: 51px; }
.styles .big:nth-child(2) { width: 68px; }
.cells .big { width: 42px; }
.stack {
    display: flex;
    flex-direction: column;
    padding-top: 4px;
}
.clipboard .stack {
    padding-left: 5px;
}
.clipboard .stack button {
    justify-content: flex-start;
    height: 23px;
    gap: 6px;
}
.editing .stack {
    width: 101px;
    padding-left: 2px;
}
.sort { width: 54px; }
.find {
    width: 42px;
    margin-left: 2px;
}
.letter {
    font-size: 17px;
    font-weight: bold;
}
.blue { fill: #4580b8; }
.purple { fill: #9a5fb5; }
.collapse {
    margin: auto 10px 5px auto;
}

/* formula bar */
.formula-bar {
    flex: none;
    display: flex;
    height: 51px;
    padding: 10px 5px;
    font-family: "Noto Sans CJK JP", sans-serif;
    font-size: 14px;
}
.name-box, .formula-tools, .formula {
    display: flex;
    align-items: center;
    background-color: #fdfdfd;
    border: solid 1px #c6c6c6;
}
.name-box {
    width: 102px;
    padding: 0 6px;
}
.name-box .caret {
    border-width: 4px 4px 0;
}
.name-box input, .formula input {
    flex: 1;
    min-width: 0;
    height: 27px;
    outline: 0;
}
.formula-bar .grip {
    margin: 9px 14px;
}
.grip {
    width: 2px;
    height: 12px;
    background: repeating-linear-gradient(#aaa 0 2px, transparent 2px 5px);
}
.formula-tools {
    width: 110px;
    margin-right: 3px;
}
.formula-tools button {
    flex: 1;
}
.formula-tools .fx {
    font-family: "Liberation Serif", serif;
    font-size: 17px;
    font-weight: bold;
    color: #666;
}
.fx small {
    font-size: 11px;
}
.formula {
    flex: 1;
    padding: 0 3px 0 12px;
}

/* worksheet */
.sheet {
    flex: 1;
    min-height: 0;
    display: flex;
}
.grid-area {
    position: relative;
    flex: 1;
    min-width: 0;
    overflow: hidden;
    border: solid #999;
    border-width: 0 1px 1px 0;
}
.grid {
    width: 100%;
    table-layout: fixed;
    border-collapse: separate;
    border-spacing: 0;
    font-family: "Noto Sans CJK JP", sans-serif;
    font-size: 15px;
    line-height: 22px;
    font-feature-settings: normal;
    color: #000;
}
.c-head { width: 29px; }
.c-a, .c-e { width: 82px; }
.c-b, .c-c { width: 73px; }
.c-d { width: 91px; }
.c-f { width: 254px; }
.c-g { width: 75px; }
.c-h { width: 188px; }
.c-i { width: 109px; }
.c-j { width: 194px; }
.c-k { width: 71px; }
.grid th, .grid td {
    height: 25px;
    padding: 0 2px 2px;
    white-space: nowrap;
    font-weight: 300;
    border: solid #d4d4d4;
    border-width: 0 1px 1px 0;
}
.grid th {
    padding: 0 0 2px;
    background-color: #e6e6e6;
    border-color: #ababab;
}
.grid thead th {
    border-bottom-color: #999;
}
.grid .corner {
    padding: 0;
}
.grid .corner svg {
    margin: 3px 3px 0 auto;
}
.grid tbody th {
    border-color: #c6c6c6 #999;
}
.grid td {
    background-color: #fff;
}
.grid .selected {
    padding-bottom: 1px;
    font-weight: 400;
    color: #217346;
    background-color: #d2d2d2;
    border-bottom: solid 2px #217346;
}
.members tr:not(.titles) th {
    font-weight: 400;
    color: #217346;
    background-color: #d2d2d2;
    border-right: solid 2px #217346;
}
.members td:nth-child(-n+11) {
    border-bottom-color: #9bc2e6;
}
.members td:nth-child(5) {
    text-align: right;
}
.members tr:nth-child(even) td:nth-child(-n+11) {
    background-color: #ddebf7;
    border-right-color: #ddebf7;
}
.members .titles td:nth-child(-n+11) {
    text-align: center;
    font-weight: bold;
    color: #fff;
    background-color: #5b9bd5;
    border-right-color: #5b9bd5;
}
.members tr:not(.titles) td:nth-child(11) {
    font-size: 14px;
    font-weight: 400;
    color: #0b4f9c;
    background-color: #c6c6c6;
    border-bottom-color: #7695b8;
}
.members tr:nth-child(even) td:nth-child(11) {
    background-color: #acb5bf;
}
.members tr:nth-child(even) td.current:nth-child(11) {
    color: #0563c1;
    background-color: #ddebf7;
}
.members a {
    text-decoration: underline;
    text-underline-offset: 3px;
}

/* annotations over the cells */
.highlight {
    position: absolute;
    left: 1050px;
    top: 47px;
    width: 204px;
    height: 357px;
    border: solid 8px #f00;
    border-radius: 5px;
}
.step {
    position: absolute;
    left: 1135px;
    top: 414px;
    width: 35px;
    height: 35px;
    border: solid 1px #f00;
    border-radius: 50%;
    background-color: #fff;
    box-shadow: 0 0 0 2px #fff, 2px 4px 8px 2px #999;
    text-align: center;
    font-size: 28px;
    font-weight: 900;
    line-height: 32px;
    color: #f00;
}
.quick-analysis {
    position: absolute;
    left: 1254px;
    top: 403px;
    width: 23px;
    height: 24px;
    background-color: #fff;
    border: solid 1px #e3e8e6;
}

/* scroll bars */
.vscroll {
    display: flex;
    flex-direction: column;
    padding: 2px 3px 0;
}
.vscroll button, .hscroll button {
    flex: none;
    width: 15px;
    height: 15px;
    background-color: #fff;
    border: solid 1px #ababab;
}
.thumb {
    background-color: #fff;
    border: solid 1px #ababab;
}
.track {
    background-color: #dadada;
}
.vscroll .thumb {
    flex: 452;
}
.vscroll .track {
    flex: 24;
}
.sheet-tabs {
    flex: none;
    display: flex;
    height: 27px;
    padding-right: 21px;
}
.nav {
    width: 28px;
}
.nav:first-child {
    margin-left: 15px;
}
.sheet-tabs .tab {
    width: 76px;
    height: 25px;
    margin: -1px 32px 0 29px;
    background-color: #fff;
    border: solid #999;
    border-width: 0 1px;
    border-bottom: solid 2px #217346;
    font-size: 13px;
    color: #217346;
    z-index: 1;
}
.sheet-tabs .grip {
    margin: 8px 16px 0 auto;
}
.hscroll {
    display: flex;
    width: 509px;
    padding-top: 6px;
}
.hscroll .thumb, .hscroll .track {
    height: 15px;
}
.hscroll .thumb {
    flex: 435;
}
.hscroll .track {
    flex: 44;
}

/* status bar */
.status {
    flex: none;
    display: flex;
    align-items: center;
    height: 23px;
    padding-left: 7px;
    background-color: #f1f1f1;
    border-top: solid 1px #c6c6c6;
    border-bottom: solid 2px #111;
}
.macro {
    margin-left: 20px;
}
.count {
    margin: 0 18px 0 auto;
}
.view {
    width: 38px;
    height: 20px;
}
.view.active {
    background-color: #c6c6c6;
}
.zoom-step {
    width: 14px;
    height: 20px;
}
.zoom {
    appearance: none;
    width: 102px;
    height: 20px;
    background: linear-gradient(#999, #999) center / 100% 1px no-repeat;
}
.zoom::-webkit-slider-thumb {
    appearance: none;
    width: 4px;
    height: 11px;
    background-color: #555;
}
.zoom-value {
    width: 54px;
    padding-left: 13px;
}
```
